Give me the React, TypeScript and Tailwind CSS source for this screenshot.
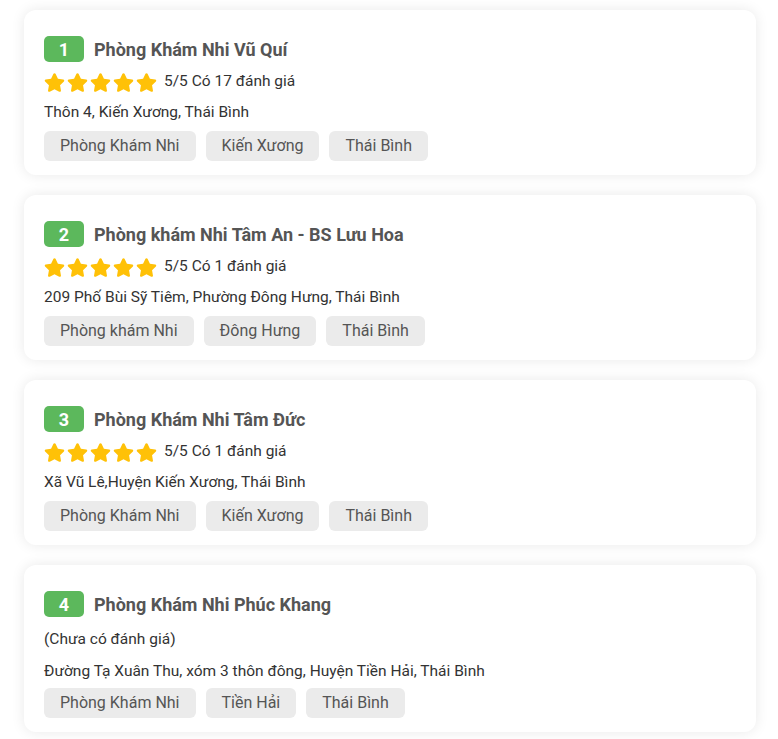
import React from 'react';
import { FaStar } from 'react-icons/fa';

interface Clinic {
  rank: number;
  name: string;
  rating?: string;
  address: string;
  tags: string[];
}

const clinics: Clinic[] = [
  {
    rank: 1,
    name: 'Phòng Khám Nhi Vũ Quí',
    rating: '5/5 Có 17 đánh giá',
    address: 'Thôn 4, Kiến Xương, Thái Bình',
    tags: ['Phòng Khám Nhi', 'Kiến Xương', 'Thái Bình'],
  },
  {
    rank: 2,
    name: 'Phòng khám Nhi Tâm An - BS Lưu Hoa',
    rating: '5/5 Có 1 đánh giá',
    address: '209 Phố Bùi Sỹ Tiêm, Phường Đông Hưng, Thái Bình',
    tags: ['Phòng khám Nhi', 'Đông Hưng', 'Thái Bình'],
  },
  {
    rank: 3,
    name: 'Phòng Khám Nhi Tâm Đức',
    rating: '5/5 Có 1 đánh giá',
    address: 'Xã Vũ Lê,Huyện Kiến Xương, Thái Bình',
    tags: ['Phòng Khám Nhi', 'Kiến Xương', 'Thái Bình'],
  },
  {
    rank: 4,
    name: 'Phòng Khám Nhi Phúc Khang',
    address: 'Đường Tạ Xuân Thu, xóm 3 thôn đông, Huyện Tiền Hải, Thái Bình',
    tags: ['Phòng Khám Nhi', 'Tiền Hải', 'Thái Bình'],
  },
];

function ClinicCard({ clinic }: { clinic: Clinic }) {
  const rated = !!clinic.rating;
  return (
    <div className="w-[732px] rounded-xl bg-white px-5 pt-[26px] pb-[14px] shadow-[0_0_14px_rgba(0,0,0,0.09)]">
      <div className="flex h-[26px] items-center gap-[10px]">
        <span className="flex h-[26px] w-[40px] items-center justify-center rounded-[5px] bg-[#5cb85c] text-[18px] font-bold text-white">
          {clinic.rank}
        </span>
        <span className="text-[18px] font-bold text-[#555]">{clinic.name}</span>
      </div>

      {rated ? (
        <div className="mt-[9px] flex h-[22px] items-center text-[15.5px] text-[#333]">
          <span className="flex gap-[2px] text-[#ffc107]">
            {[0, 1, 2, 3, 4].map((i) => (
              <FaStar key={i} size={21} />
            ))}
          </span>
          <span className="ml-[7px]">{clinic.rating}</span>
        </div>
      ) : (
        <div className="mt-[12px] flex h-[22px] items-center text-[15.5px] text-[#333]">(Chưa có đánh giá)</div>
      )}

      <div
        className={
          rated
            ? 'mt-[8px] h-[22px] text-[15.5px] leading-[22px] text-[#333]'
            : 'mt-[9px] h-[22px] text-[15.5px] leading-[22px] text-[#333]'
        }
      >
        {clinic.address}
      </div>

      <div className={rated ? 'mt-[8px] flex gap-[10px]' : 'mt-[6px] flex gap-[10px]'}>
        {clinic.tags.map((tag) => (
          <span
            key={tag}
            className="flex h-[30px] items-center rounded-md bg-[#ebebeb] px-4 text-[16px] text-[#555]"
          >
            {tag}
          </span>
        ))}
      </div>
    </div>
  );
}

export default function App() {
  return (
    <div className="min-h-screen bg-white pl-6 pt-[10px] font-['Roboto',sans-serif]">
      <div className="flex flex-col gap-5">
        {clinics.map((c) => (
          <ClinicCard key={c.rank} clinic={c} />
        ))}
      </div>
    </div>
  );
}
